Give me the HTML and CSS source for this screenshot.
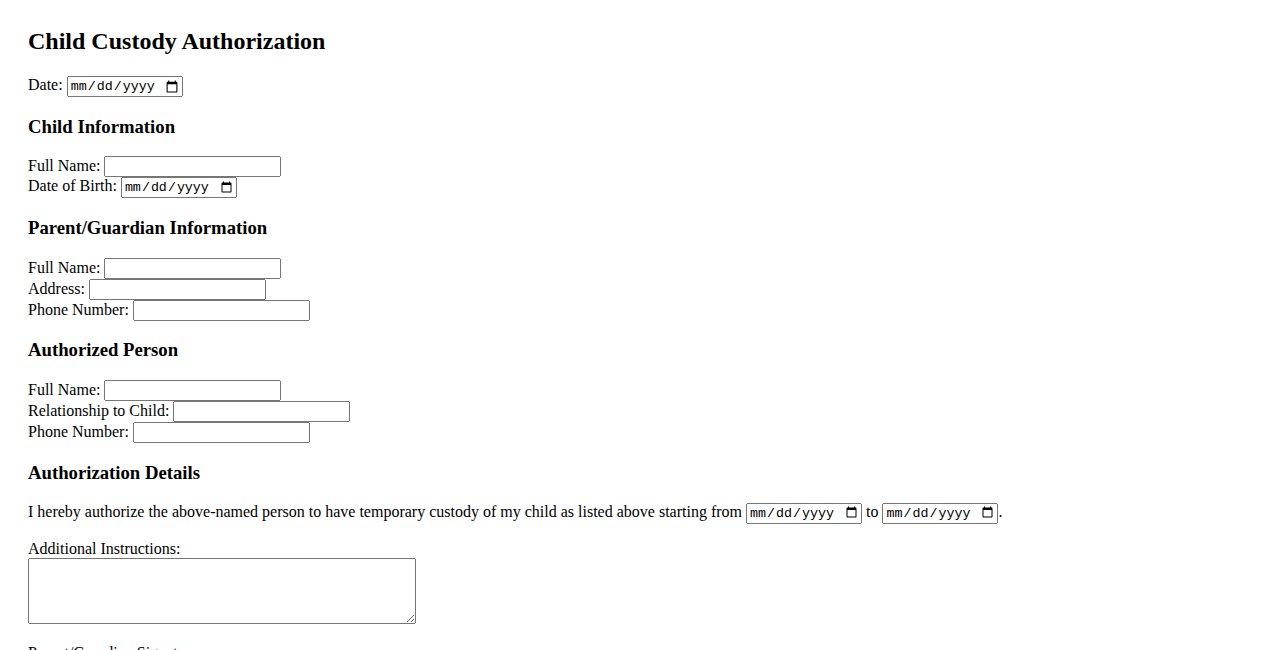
FILE: index.html
```html
<!DOCTYPE html>
<html>
<head>
<meta charset="utf-8">
<title>Child Custody Authorization</title>
<link rel="stylesheet" href="styles.css">
</head>
<body>
<form class="form">
  <h2 class="title">Child Custody Authorization</h2>
  <label>Date:</label> <input class="date" type="date">

  <h3 class="section">Child Information</h3>
  <label>Full Name:</label> <input class="text" type="text"><br>
  <label>Date of Birth:</label> <input class="date" type="date">

  <h3 class="section">Parent/Guardian Information</h3>
  <label>Full Name:</label> <input class="text" type="text"><br>
  <label>Address:</label> <input class="text" type="text"><br>
  <label>Phone Number:</label> <input class="text" type="tel">

  <h3 class="section">Authorized Person</h3>
  <label>Full Name:</label> <input class="text" type="text"><br>
  <label>Relationship to Child:</label> <input class="text" type="text"><br>
  <label>Phone Number:</label> <input class="text" type="tel">

  <h3 class="section">Authorization Details</h3>
  <p class="para">I hereby authorize the above-named person to have temporary custody of my child as listed above starting from <input class="date" type="date"> to <input class="date" type="date">.</p>
  <p class="para"><label>Additional Instructions:</label><br>
  <textarea class="notes"></textarea></p>
  <p class="para"><label>Parent/Guardian Signature:</label><br>
  <input class="text" type="text"></p>
</form>
</body>
</html>
```
FILE: styles.css
```css
body {
  margin: 0;
  padding: 8px 28px;
  font-family: "Liberation Serif", "Times New Roman", serif;
  font-size: 16px;
  color: #000;
  background: #fff;
}
.form {
  margin: 0;
}
.title {
  font-size: 24px;
  margin: 19.92px 0 20.92px;
}
.section {
  font-size: 18.72px;
  margin: 18.72px 0;
}
.para {
  margin: 16px 0;
}
.text {
  box-sizing: border-box;
  width: 177px;
  height: 21px;
  font-size: 13.33px;
  font-family: "Liberation Sans", Arial, sans-serif;
  vertical-align: baseline;
}
.date {
  box-sizing: border-box;
  width: 116px;
  height: 21px;
  font-size: 13.33px;
  font-family: "Liberation Mono", monospace;
}
.notes {
  box-sizing: border-box;
  width: 388px;
  height: 66px;
  font-family: "Liberation Mono", monospace;
  font-size: 13.33px;
}
```
